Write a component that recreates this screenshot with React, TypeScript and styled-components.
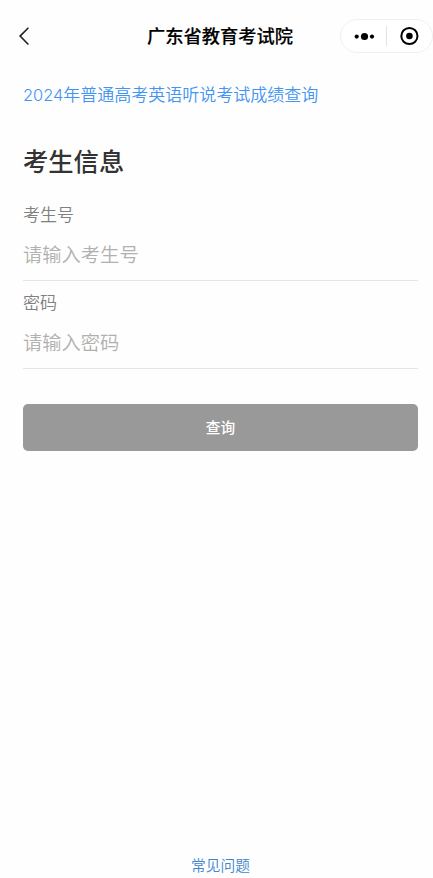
import React from "react";
import styled, { createGlobalStyle } from "styled-components";

const GlobalStyle = createGlobalStyle`
  * { box-sizing: border-box; }
  body {
    margin: 0;
    background: #fff;
    font-family: "Noto Sans CJK SC", sans-serif;
  }
`;

const Page = styled.div`
  display: flex;
  flex-direction: column;
  height: 878px;
  overflow: hidden;
  background: #fefefe;
`;

const NavBar = styled.header`
  display: grid;
  grid-template-columns: 93px 1fr 93px;
  align-items: center;
  height: 72px;
  flex: none;
`;

const BackButton = styled.button`
  display: flex;
  width: 44px;
  height: 44px;
  padding: 12px 0 0 16px;
  border: 0;
  background: none;
`;

const Title = styled.h1`
  margin: 0 0 2px 7px;
  text-align: center;
  font-size: 18.25px;
  line-height: 26px;
  font-weight: 500;
  color: #000;
  -webkit-text-stroke: 0.15px #000;
  white-space: nowrap;
`;

const Capsule = styled.div`
  display: flex;
  width: 93px;
  height: 34px;
  border: 1px solid #f0f0f0;
  border-radius: 17px;
  background: #fff;
`;

const Content = styled.main`
  display: flex;
  flex-direction: column;
  flex: 1;
  padding: 10px 15px 0 23px;
`;

const ExamLink = styled.a`
  height: 26px;
  font-size: 17px;
  line-height: 24px;
  font-weight: 350;
  color: #4295f2;
  white-space: nowrap;
`;

const Year = styled.span`
  font-family: "Inter", "Liberation Sans", sans-serif;
  font-size: 16.4px;
  line-height: 1;
  font-weight: 300;
`;

const SectionTitle = styled.h2`
  margin: 33px 0 0;
  font-size: 25.3px;
  line-height: 38px;
  font-weight: 500;
  color: #333;
`;

const Field = styled.label`
  display: flex;
  flex-direction: column;
  height: 88px;
  padding-top: 8px;
  border-bottom: 1px solid #e5e5e5;
`;

const Fields = styled.div`
  margin-top: 14px;
`;

const FieldLabel = styled.span`
  font-size: 17px;
  line-height: 26px;
  font-weight: 350;
  color: #808080;
`;

const FieldInput = styled.input`
  height: 30px;
  margin-top: 12px;
  padding: 0;
  border: 0;
  outline: 0;
  background: none;
  font-family: inherit;
  font-size: 19.3px;
  font-weight: 350;
  color: #333;
  &::placeholder { color: #b0b0b0; opacity: 1; }
`;

const SubmitButton = styled.button`
  height: 47px;
  margin-top: 35px;
  padding: 0 0 2px;
  border: 0;
  border-radius: 5px;
  background: #999;
  color: #fff;
  font-family: inherit;
  font-size: 14.7px;
  font-weight: 500;
`;

const Footer = styled.footer`
  display: flex;
  justify-content: center;
  padding: 0 0 2px 8px;
`;

const FaqLink = styled.a`
  font-size: 14.7px;
  line-height: 22px;
  font-weight: 350;
  color: #3e86cd;
`;

const fields = [
  { label: "考生号", placeholder: "请输入考生号", type: "text" },
  { label: "密码", placeholder: "请输入密码", type: "password" },
];

export default function App() {
  return (
    <Page>
      <GlobalStyle />
      <NavBar>
        <BackButton aria-label="返回">
          <svg width="16" height="22" viewBox="0 0 16 22" fill="none">
            <path d="M12.4 1.7 4.1 10.1 12.4 18.5" stroke="#222" strokeWidth="1.6" />
          </svg>
        </BackButton>
        <Title>广东省教育考试院</Title>
        <Capsule>
          <svg width="91" height="32" viewBox="0 0 91 32" fill="none">
            <circle cx="15.7" cy="16.6" r="2.1" fill="#000" />
            <circle cx="23.5" cy="16.5" r="3.6" fill="#000" />
            <circle cx="31" cy="16.6" r="2.1" fill="#000" />
            <path d="M45.5 6v20" stroke="#e2e2e2" />
            <circle cx="68.4" cy="16" r="8.1" stroke="#000" strokeWidth="2" />
            <circle cx="68.4" cy="16" r="3.3" fill="#000" />
          </svg>
        </Capsule>
      </NavBar>
      <Content>
        <ExamLink><Year>2024</Year>年普通高考英语听说考试成绩查询</ExamLink>
        <SectionTitle>考生信息</SectionTitle>
        <Fields>
          {fields.map((field) => (
            <Field key={field.label}>
              <FieldLabel>{field.label}</FieldLabel>
              <FieldInput type={field.type} placeholder={field.placeholder} />
            </Field>
          ))}
        </Fields>
        <SubmitButton>查询</SubmitButton>
      </Content>
      <Footer>
        <FaqLink>常见问题</FaqLink>
      </Footer>
    </Page>
  );
}
